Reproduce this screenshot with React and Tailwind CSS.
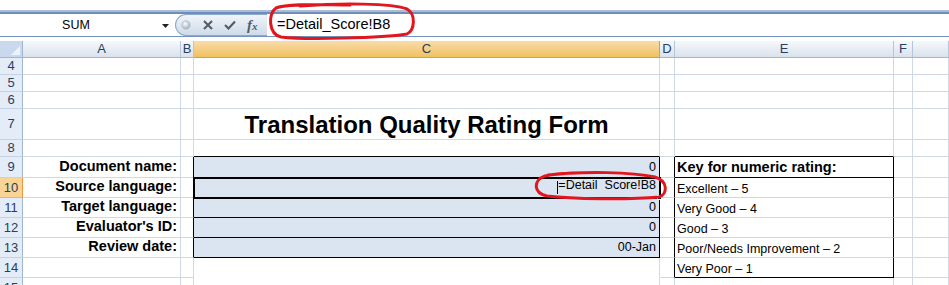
import React from "react";

const W = {
  A: "w-[158px]",
  B: "w-[13px]",
  C: "w-[466px]",
  D: "w-[15px]",
  E: "w-[219px]",
  F: "w-[19px]",
};

const RIGHT = {
  g: "border-r-[#d0d7e5]",
  k: "border-r-black",
};
const BOTTOM = {
  g: "border-b-[#d0d7e5]",
  k: "border-b-black",
  n: "border-b-white",
};

const Cell = ({ col, r = "g", b = "g", className = "", children }) => (
  <div
    className={`${col ? W[col] + " shrink-0" : "flex-1"} border-r border-b ${RIGHT[r]} ${BOTTOM[b]} ${className}`}
  >
    {children}
  </div>
);

const RowHead = ({ n, active }) => (
  <div
    className={`w-[23px] shrink-0 border-r border-b flex items-center justify-center text-[13px] text-[#27405f] ${
      active
        ? "bg-[#f8d596] border-r-[#f29536] border-b-[#e9b565]"
        : "bg-[#e4ecf7] border-r-[#9eb6ce] border-b-[#c5d2e3]"
    }`}
  >
    {n}
  </div>
);

const label = "flex items-end justify-end pr-[3px] pb-[2px] text-[14.5px] leading-[17px] font-bold";
const value = "flex items-end justify-end pr-[3px] pb-[2px] text-[12.5px] leading-[15px] bg-[#dbe5f1]";
const key = "flex items-end pl-[2px] text-[12.5px] leading-[15px]";

const ColHead = ({ col, children, active }) => (
  <div
    className={`${col ? W[col] + " shrink-0" : "flex-1"} border-r border-b flex items-center justify-center text-[13px] text-[#27405f] ${
      active
        ? "bg-linear-to-b from-[#f9dca8] to-[#f1c15e] border-r-[#f29536] border-b-[#f29536]"
        : "bg-linear-to-b from-[#f6f8fb] to-[#dae2ed] border-r-[#b6c6da] border-b-[#9eb6ce]"
    }`}
  >
    {children}
  </div>
);

const App = () => {
  return (
    <div className="relative w-[949px] h-[285px] overflow-hidden bg-white font-['Liberation_Sans',Arial,sans-serif] text-black">
      <div className="h-[10px] bg-white" />
      <div className="h-[2px] bg-[#abbdd5]" />
      <div className="h-[2px] bg-[#6d8eba]" />

      {/* formula bar */}
      <div className="flex h-[22px] bg-white">
        <div className="w-[172px] shrink-0 flex items-center">
          <span className="w-[152px] text-center text-[12.5px]">SUM</span>
          <svg width="7" height="4" viewBox="0 0 7 4" className="ml-[10px] mt-[2px]">
            <path d="M0 0 H7 L3.5 4 Z" fill="#222" />
          </svg>
        </div>
        <div className="ml-[3px] w-[92px] shrink-0 flex items-center rounded-l-full border border-r-0 border-[#8ea8c8] bg-linear-to-b from-[#f0f4fa] to-[#cfdbea] pl-[5px]">
          <svg width="10" height="10" viewBox="0 0 10 10">
            <defs>
              <radialGradient id="dot" cx="0.4" cy="0.35" r="0.6">
                <stop offset="0" stopColor="#ffffff" />
                <stop offset="1" stopColor="#a9b3bf" />
              </radialGradient>
            </defs>
            <circle cx="5" cy="5" r="4.2" fill="url(#dot)" stroke="#b4bdc8" strokeWidth="0.8" />
          </svg>
          <svg width="10" height="10" viewBox="0 0 10 10" className="ml-[12px]">
            <path d="M1 1 L9 9 M9 1 L1 9" stroke="#505b68" strokeWidth="2" />
          </svg>
          <svg width="12" height="10" viewBox="0 0 12 10" className="ml-[11px]">
            <path d="M1 5 L4.5 8.5 L11 1.5" stroke="#505b68" strokeWidth="2.1" fill="none" />
          </svg>
          <span className="ml-[11px] font-['Liberation_Serif',serif] italic font-bold text-[15px] leading-none text-[#4f5d6c]">
            f<span className="text-[11px]">x</span>
          </span>
        </div>
        <div className="flex-1 flex items-center pl-[10px] text-[14.5px]">=Detail_Score!B8</div>
      </div>
      <div className="h-px bg-[#7594bd]" />
      <div className="h-[4px] bg-white" />

      {/* column headers */}
      <div className="flex h-[17px]">
        <div className="w-[23px] shrink-0 border-r border-b border-r-[#9eb6ce] border-b-[#9eb6ce] bg-[#c9d8ec] flex items-end justify-end pr-[2px] pb-[2px]">
          <svg width="9" height="9" viewBox="0 0 9 9">
            <path d="M9 0 L9 9 L0 9 Z" fill="#eef3fa" />
          </svg>
        </div>
        <ColHead col="A">A</ColHead>
        <ColHead col="B">B</ColHead>
        <ColHead col="C" active>C</ColHead>
        <ColHead col="D">D</ColHead>
        <ColHead col="E">E</ColHead>
        <ColHead col="F">F</ColHead>
        <ColHead />
      </div>

      {[4, 5, 6].map((n) => (
        <div key={n} className="flex h-[17px]">
          <RowHead n={n} />
          <Cell col="A" />
          <Cell col="B" />
          <Cell col="C" />
          <Cell col="D" />
          <Cell col="E" />
          <Cell col="F" />
          <Cell />
        </div>
      ))}

      <div className="flex h-[31px]">
        <RowHead n={7} />
        <Cell col="A" />
        <Cell col="B" />
        <Cell col="C" className="flex items-end justify-center text-[24px] leading-[28px] font-bold">
          Translation Quality Rating Form
        </Cell>
        <Cell col="D" />
        <Cell col="E" />
        <Cell col="F" />
        <Cell />
      </div>

      <div className="flex h-[17px]">
        <RowHead n={8} />
        <Cell col="A" />
        <Cell col="B" />
        <Cell col="C" b="k" />
        <Cell col="D" />
        <Cell col="E" b="k" />
        <Cell col="F" />
        <Cell />
      </div>

      <div className="flex h-[21px]">
        <RowHead n={9} />
        <Cell col="A" className={label}>Document name:</Cell>
        <Cell col="B" r="k" />
        <Cell col="C" r="k" b="k" className={value}>0</Cell>
        <Cell col="D" r="k" />
        <Cell col="E" r="k" b="k" className="flex items-end pl-[2px] pb-[1px] text-[14.5px] leading-[17px] font-bold">
          Key for numeric rating:
        </Cell>
        <Cell col="F" />
        <Cell />
      </div>

      <div className="flex h-[20px]">
        <RowHead n={10} active />
        <Cell col="A" className={label}>Source language:</Cell>
        <Cell col="B" r="k" />
        <Cell
          col="C"
          r="k"
          b="k"
          className={`${value} relative outline-2 outline-black -outline-offset-1 pb-[4px]`}
        >
          <span className="w-px h-[13px] bg-black self-center mb-[-3px]" />
          =Detail<span className="text-transparent">_</span>Score!B8
          <span className="absolute -right-[3px] -bottom-[3px] w-[5px] h-[5px] bg-black border border-white" />
        </Cell>
        <Cell col="D" r="k" />
        <Cell col="E" r="k" className={key}>Excellent – 5</Cell>
        <Cell col="F" />
        <Cell />
      </div>

      {[
        [11, "Target language:", "0", "Very Good – 4"],
        [12, "Evaluator's ID:", "0", "Good – 3"],
        [13, "Review date:", "00-Jan", "Poor/Needs Improvement – 2"],
      ].map(([n, lab, val, k]) => (
        <div key={n} className="flex h-[20px]">
          <RowHead n={n} />
          <Cell col="A" className={label}>{lab}</Cell>
          <Cell col="B" r="k" />
          <Cell col="C" r="k" b="k" className={value}>{val}</Cell>
          <Cell col="D" r="k" />
          <Cell col="E" r="k" className={key}>{k}</Cell>
          <Cell col="F" />
          <Cell />
        </div>
      ))}

      <div className="flex h-[20px]">
        <RowHead n={14} />
        <Cell col="A" />
        <Cell col="B" />
        <Cell col="C" b="n" />
        <Cell col="D" r="k" />
        <Cell col="E" r="k" b="k" className={key}>Very Poor – 1</Cell>
        <Cell col="F" />
        <Cell />
      </div>

      <div className="flex h-[20px]">
        <RowHead n={15} />
        <Cell col="A" />
        <Cell col="B" />
        <Cell col="C" />
        <Cell col="D" />
        <Cell col="E" />
        <Cell col="F" />
        <Cell />
      </div>

      {/* red annotation marks */}
      <svg
        className="absolute left-0 top-0 pointer-events-none"
        width="949"
        height="285"
        viewBox="0 0 949 285"
        fill="none"
      >
        <path
          d="M300 6 C340 3 392 3 407 9 C416 14 415 30 407 34 C382 38 305 40 281 37 C268 34 268 13 276 8 C288 3 325 5 350 5"
          stroke="#e2161f"
          strokeWidth="3"
          strokeLinecap="round"
        />
        <path
          d="M548 175 C585 171 632 172 655 177 C668 181 668 194 659 197 C628 200 572 199 547 196 C533 193 533 180 545 176 C556 173 570 173 580 173"
          stroke="#e2161f"
          strokeWidth="3"
          strokeLinecap="round"
        />
      </svg>
    </div>
  );
};

export default App;
